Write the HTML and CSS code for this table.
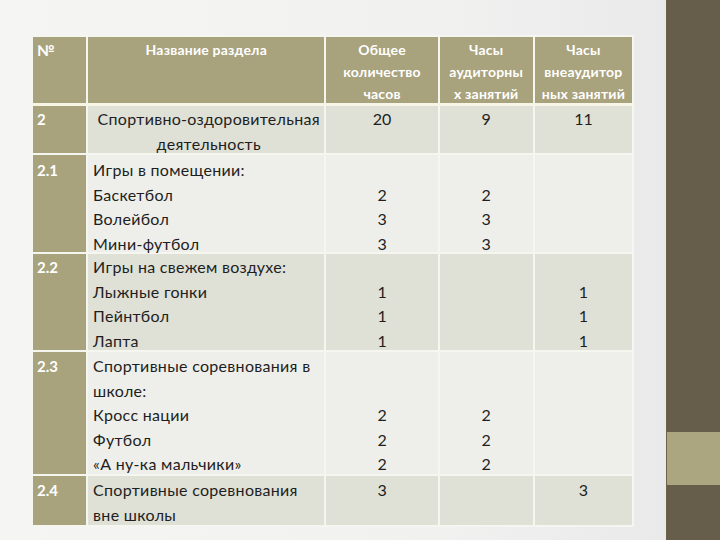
FILE: index.html
```html
<!DOCTYPE html>
<html lang="ru">
<head>
<meta charset="utf-8">
<link rel="stylesheet" href="styles.css">
</head>
<body>
<div class="page">
  <main class="slide">
    <table class="plan">
      <colgroup>
        <col class="c1"><col class="c2"><col class="c3"><col class="c4"><col class="c5">
      </colgroup>
      <thead>
        <tr>
          <th class="num"><div class="cell">№</div></th>
          <th><div class="cell">Название раздела</div></th>
          <th><div class="cell">Общее<br>количество<br>часов</div></th>
          <th><div class="cell">Часы<br>аудиторны<br>х занятий</div></th>
          <th><div class="cell">Часы<br>внеаудитор<br>ных занятий</div></th>
        </tr>
      </thead>
      <tbody>
        <tr class="dark r2">
          <td class="num"><div class="cell">2</div></td>
          <td class="name center"><div class="cell">Спортивно-оздоровительная<br>деятельность</div></td>
          <td><div class="cell">20</div></td>
          <td><div class="cell">9</div></td>
          <td><div class="cell">11</div></td>
        </tr>
        <tr class="light r21">
          <td class="num"><div class="cell">2.1</div></td>
          <td class="name"><div class="cell">Игры в помещении:<br>Баскетбол<br>Волейбол<br>Мини-футбол</div></td>
          <td><div class="cell"><br>2<br>3<br>3</div></td>
          <td><div class="cell"><br>2<br>3<br>3</div></td>
          <td><div class="cell"></div></td>
        </tr>
        <tr class="dark r22">
          <td class="num"><div class="cell">2.2</div></td>
          <td class="name"><div class="cell">Игры на свежем воздухе:<br>Лыжные гонки<br>Пейнтбол<br>Лапта</div></td>
          <td><div class="cell"><br>1<br>1<br>1</div></td>
          <td><div class="cell"></div></td>
          <td><div class="cell"><br>1<br>1<br>1</div></td>
        </tr>
        <tr class="light r23">
          <td class="num"><div class="cell">2.3</div></td>
          <td class="name"><div class="cell">Спортивные соревнования в<br>школе:<br>Кросс нации<br>Футбол<br>«А ну-ка мальчики»</div></td>
          <td><div class="cell"><br><br>2<br>2<br>2</div></td>
          <td><div class="cell"><br><br>2<br>2<br>2</div></td>
          <td><div class="cell"></div></td>
        </tr>
        <tr class="dark r24">
          <td class="num"><div class="cell">2.4</div></td>
          <td class="name"><div class="cell">Спортивные соревнования<br>вне школы</div></td>
          <td><div class="cell">3</div></td>
          <td><div class="cell"></div></td>
          <td><div class="cell">3</div></td>
        </tr>
      </tbody>
    </table>
  </main>
  <aside class="band">
    <div class="band-top"></div>
    <div class="band-stripe"></div>
    <div class="band-bottom"></div>
  </aside>
</div>
</body>
</html>
```

FILE: styles.css
```css
html, body {
  margin: 0;
  padding: 0;
  width: 720px;
  height: 540px;
  overflow: hidden;
}
body {
  font-family: Lato, "Open Sans", sans-serif;
  color: #1e1e1e;
}
.page {
  display: flex;
  width: 720px;
  height: 540px;
  background: linear-gradient(90deg, #f5f5f4 0%, #f1f1f0 60%, #e8e8ea 100%);
}
.slide {
  flex: 1;
  padding: 35px 0 0 31px;
}
.band {
  width: 53px;
  display: flex;
  flex-direction: column;
  background: #665e4a;
  border-left: 1px solid #6f6345;
}
.band-top { height: 432px; }
.band-stripe {
  height: 53px;
  background: #aba67f;
}
.band-bottom { flex: 1; }

.plan {
  border-collapse: collapse;
  table-layout: fixed;
  width: 603px;
}
.c1 { width: 55px; }
.c2 { width: 238px; }
.c3 { width: 113px; }
.c4 { width: 95px; }
.c5 { width: 99px; }

.plan th, .plan td {
  border: 2px solid #f6f6f1;
  vertical-align: top;
  padding: 0;
  text-align: center;
}
.cell {
  overflow: visible;
  white-space: nowrap;
}
.plan th {
  background: #a8a27d;
  color: #ffffff;
  font-weight: 700;
  font-size: 14px;
  letter-spacing: 0.2px;
  line-height: 22px;
}
.plan th .cell {
  height: 64px;
  padding-top: 2px;
}
.plan td {
  font-size: 16px;
  line-height: 24.6px;
}
.plan td .cell { padding-top: 1px; }
.r2 .cell { height: 46px; }
.r21 td .cell { height: 94px; padding-top: 3px; }
.r22 .cell { height: 95px; }
.r23 td .cell { height: 120px; padding-top: 2px; }
.r24 td .cell { height: 47px; padding-top: 2px; }

.plan th.num, .plan td.num {
  text-align: left;
  background: #a8a27d;
  color: #ffffff;
  font-weight: 700;
  font-size: 15px;
  padding-left: 4px;
}
.plan td.name {
  text-align: left;
  padding-left: 5px;
  letter-spacing: 0.3px;
}
.plan td.name.center { text-align: center; }
.dark td { background: #dfe0d6; }
.light td { background: #eeefea; }
.plan thead th { border-bottom-width: 3px; border-bottom-color: #f7f5e6; }
```
